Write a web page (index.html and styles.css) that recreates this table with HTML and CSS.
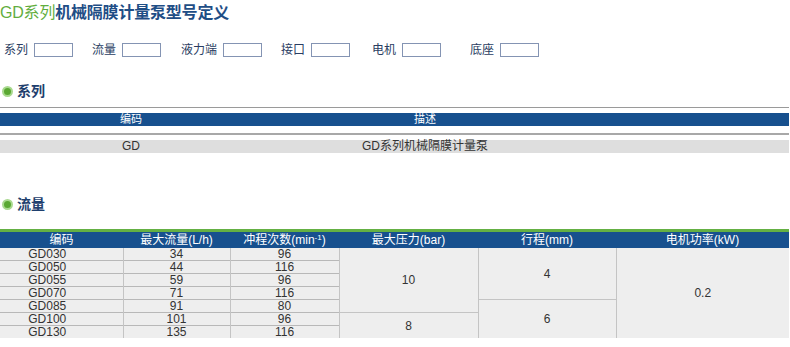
FILE: index.html
```html
<!DOCTYPE html>
<html lang="zh">
<head>
<meta charset="utf-8">
<title>GD系列机械隔膜计量泵型号定义</title>
<link rel="stylesheet" href="styles.css">
</head>
<body>
<h1 class="title"><span class="title-green">GD系列</span>机械隔膜计量泵型号定义</h1>

<div class="form">
  <div class="field"><span class="label">系列</span><span class="box"></span></div>
  <div class="field"><span class="label">流量</span><span class="box"></span></div>
  <div class="field field-end"><span class="label">液力端</span><span class="box"></span></div>
  <div class="field"><span class="label">接口</span><span class="box"></span></div>
  <div class="field field-motor"><span class="label">电机</span><span class="box"></span></div>
  <div class="field field-base"><span class="label">底座</span><span class="box"></span></div>
</div>

<h2 class="sec sec-first"><span class="dot"></span>系列</h2>
<div class="series">
  <div class="series-head">
    <span>编码</span><span>描述</span><span></span>
  </div>
  <div class="series-row">
    <span>GD</span><span>GD系列机械隔膜计量泵</span><span></span>
  </div>
</div>

<h2 class="sec sec-flow"><span class="dot"></span>流量</h2>
<table class="flow">
  <colgroup>
    <col class="c1"><col class="c2"><col class="c3"><col class="c4"><col class="c5"><col class="c6">
  </colgroup>
  <thead>
    <tr><th>编码</th><th>最大流量(L/h)</th><th>冲程次数(min<sup>-1</sup>)</th><th>最大压力(bar)</th><th>行程(mm)</th><th>电机功率(kW)</th></tr>
  </thead>
  <tbody>
    <tr><td class="code">GD030</td><td>34</td><td>96</td><td rowspan="5" class="merged">10</td><td rowspan="4" class="merged">4</td><td rowspan="7" class="merged">0.2</td></tr>
    <tr><td class="code">GD050</td><td>44</td><td>116</td></tr>
    <tr><td class="code">GD055</td><td>59</td><td>96</td></tr>
    <tr><td class="code">GD070</td><td>71</td><td>116</td></tr>
    <tr><td class="code">GD085</td><td>91</td><td>80</td><td rowspan="3" class="merged">6</td></tr>
    <tr><td class="code">GD100</td><td>101</td><td>96</td><td rowspan="2" class="merged">8</td></tr>
    <tr><td class="code">GD130</td><td>135</td><td>116</td></tr>
  </tbody>
</table>
</body>
</html>
```

FILE: styles.css
```css
html, body {
  margin: 0;
  padding: 0;
  background: #ffffff;
}
body {
  width: 790px;
  height: 347px;
  overflow: hidden;
  font-family: "Liberation Sans", "Noto Sans CJK SC", sans-serif;
  color: #333333;
}

.title {
  margin: 0;
  padding-top: 1px;
  font-size: 16px;
  line-height: 24px;
  font-weight: bold;
  color: #1f4e86;
  letter-spacing: -0.2px;
}
.title-green {
  color: #62ad3e;
  font-weight: normal;
}

.form {
  display: flex;
  align-items: center;
  margin-top: 18px;
  padding-left: 4px;
  height: 14px;
  column-gap: 19px;
  font-size: 12px;
  line-height: 14px;
  color: #2a3d62;
}
.field {
  display: flex;
  align-items: center;
  gap: 6px;
}
.field-end { margin-left: 1px; }
.field-motor { margin-left: 3px; }
.field-base { margin-left: 10px; }
.box {
  display: block;
  width: 37px;
  height: 12px;
  border: 1px solid #8494b3;
  background: #fff;
}

.sec {
  display: flex;
  align-items: center;
  gap: 4px;
  margin: 0;
  padding-left: 2px;
  font-size: 14px;
  line-height: 20px;
  font-weight: bold;
  color: #1f3f6e;
}
.sec-first { margin-top: 24px; }
.sec-flow { margin-top: 41px; }
.dot {
  display: block;
  width: 7px;
  height: 7px;
  border-radius: 50%;
  background: #5aa832;
  border: 2px solid #a9d98f;
}

.series {
  margin-top: 6px;
  width: 789px;
  border-top: 1px solid #9a9a9a;
  padding-top: 5px;
  font-size: 12px;
}
.series-head,
.series-row {
  display: grid;
  grid-template-columns: 262px 326px 1fr;
  height: 13px;
  line-height: 13px;
  text-align: center;
}
.series-head {
  background: #17508e;
  color: #ffffff;
  font-size: 11px;
}
.series-row {
  margin-top: 7px;
  border-top: 2px solid #a8a8a8;
  padding-top: 5px;
  background: linear-gradient(#ffffff, #ffffff) top / 100% 5px no-repeat, #dedede;
  color: #333333;
}

.flow {
  margin-top: 15px;
  width: 789px;
  border-collapse: collapse;
  table-layout: fixed;
  font-size: 12px;
}
.c1 { width: 123px; }
.c2 { width: 107px; }
.c3 { width: 109px; }
.c4 { width: 139px; }
.c5 { width: 138px; }
.c6 { width: 173px; }
.flow thead tr {
  border-top: 3px solid #64b043;
}
.flow th {
  background: #17508e;
  color: #ffffff;
  font-weight: normal;
  font-size: 12px;
  height: 16px;
  line-height: 16px;
  padding: 0;
  text-align: center;
}
.flow sup {
  font-size: 8px;
  line-height: 0;
  vertical-align: 4px;
}
.flow td {
  background: #eeeeee;
  height: 12px;
  line-height: 12px;
  padding: 0;
  text-align: center;
  color: #333333;
  border-top: 1px solid #b8b8b8;
  border-left: 1px solid #c4c4c4;
  border-right: 1px solid #c4c4c4;
}
.flow tbody tr:first-child td { border-top: none; }
.flow td.code {
  border-left: none;
  padding-right: 28px;
}
.flow td.merged {
  vertical-align: middle;
  border-top: 1px solid #c4c4c4;
}
.flow tbody tr:first-child td.merged { border-top: none; }
.flow td:last-child { border-right: none; }
```
